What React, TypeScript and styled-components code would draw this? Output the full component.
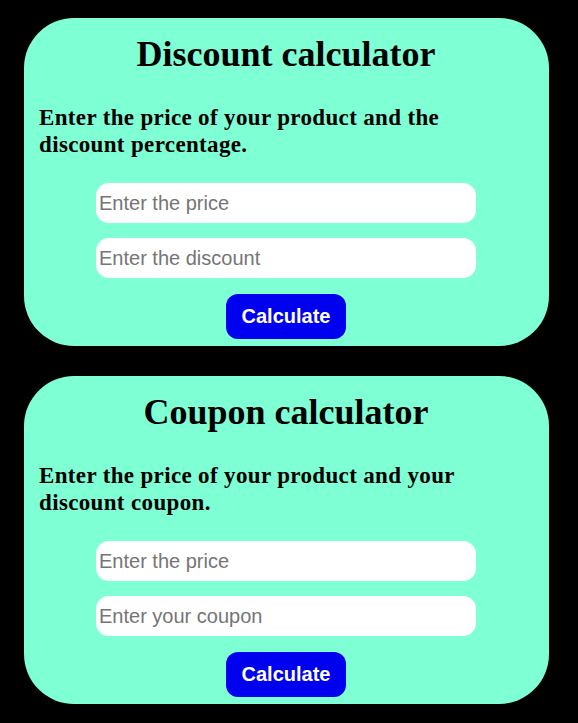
import styled, { createGlobalStyle } from "styled-components";

const GlobalStyle = createGlobalStyle`
    html, body {
        margin: 0;
        padding: 0;
        background: #000000;
    }
`;

const Page = styled.div`
    display: flex;
    flex-direction: column;
    gap: 30px;
    padding: 18px 29px 18px 24px;
    background: #000000;
    min-height: 723px;
    box-sizing: border-box;
`;

const Card = styled.section`
    display: flex;
    flex-direction: column;
    align-items: center;
    background: #7fffd4;
    border-radius: 50px;
    padding: 16px 16px 7px 15px;
`;

const Title = styled.h1`
    margin: 0;
    font-family: "Liberation Serif", "Times New Roman", serif;
    font-weight: bold;
    font-size: 36px;
    line-height: 40px;
    color: #000000;
    text-align: center;
`;

const Prompt = styled.h3`
    align-self: stretch;
    margin: 31px 39px 25px 0;
    font-family: "Liberation Serif", "Times New Roman", serif;
    font-weight: bold;
    font-size: 23px;
    line-height: 26.5px;
    letter-spacing: 0.35px;
    color: #000000;
`;

const Field = styled.input`
    box-sizing: border-box;
    width: 380px;
    height: 40px;
    margin-bottom: 15px;
    padding: 0 3px;
    border: none;
    border-radius: 13px;
    background: #ffffff;
    font-family: "Liberation Sans", Arial, sans-serif;
    font-size: 20px;
    color: #000000;
    outline: none;

    &::placeholder {
        color: #757575;
    }
`;

const Button = styled.button`
    width: 120px;
    height: 45px;
    margin-top: 1px;
    border: none;
    border-radius: 12px;
    background: #0000f0;
    color: #ffffff;
    font-family: "Liberation Sans", Arial, sans-serif;
    font-weight: bold;
    font-size: 20px;
    cursor: pointer;
`;

const calculators = [
    {
        title: "Discount calculator",
        prompt: "Enter the price of your product and the discount percentage.",
        second: "Enter the discount",
    },
    {
        title: "Coupon calculator",
        prompt: "Enter the price of your product and your discount coupon.",
        second: "Enter your coupon",
    },
];

function App() {
    return (
        <>
            <GlobalStyle />
            <Page>
                {calculators.map((calc) => (
                    <Card key={calc.title}>
                        <Title>{calc.title}</Title>
                        <Prompt>{calc.prompt}</Prompt>
                        <Field type="number" placeholder="Enter the price" />
                        <Field type="number" placeholder={calc.second} />
                        <Button>Calculate</Button>
                    </Card>
                ))}
            </Page>
        </>
    );
}

export default App;
